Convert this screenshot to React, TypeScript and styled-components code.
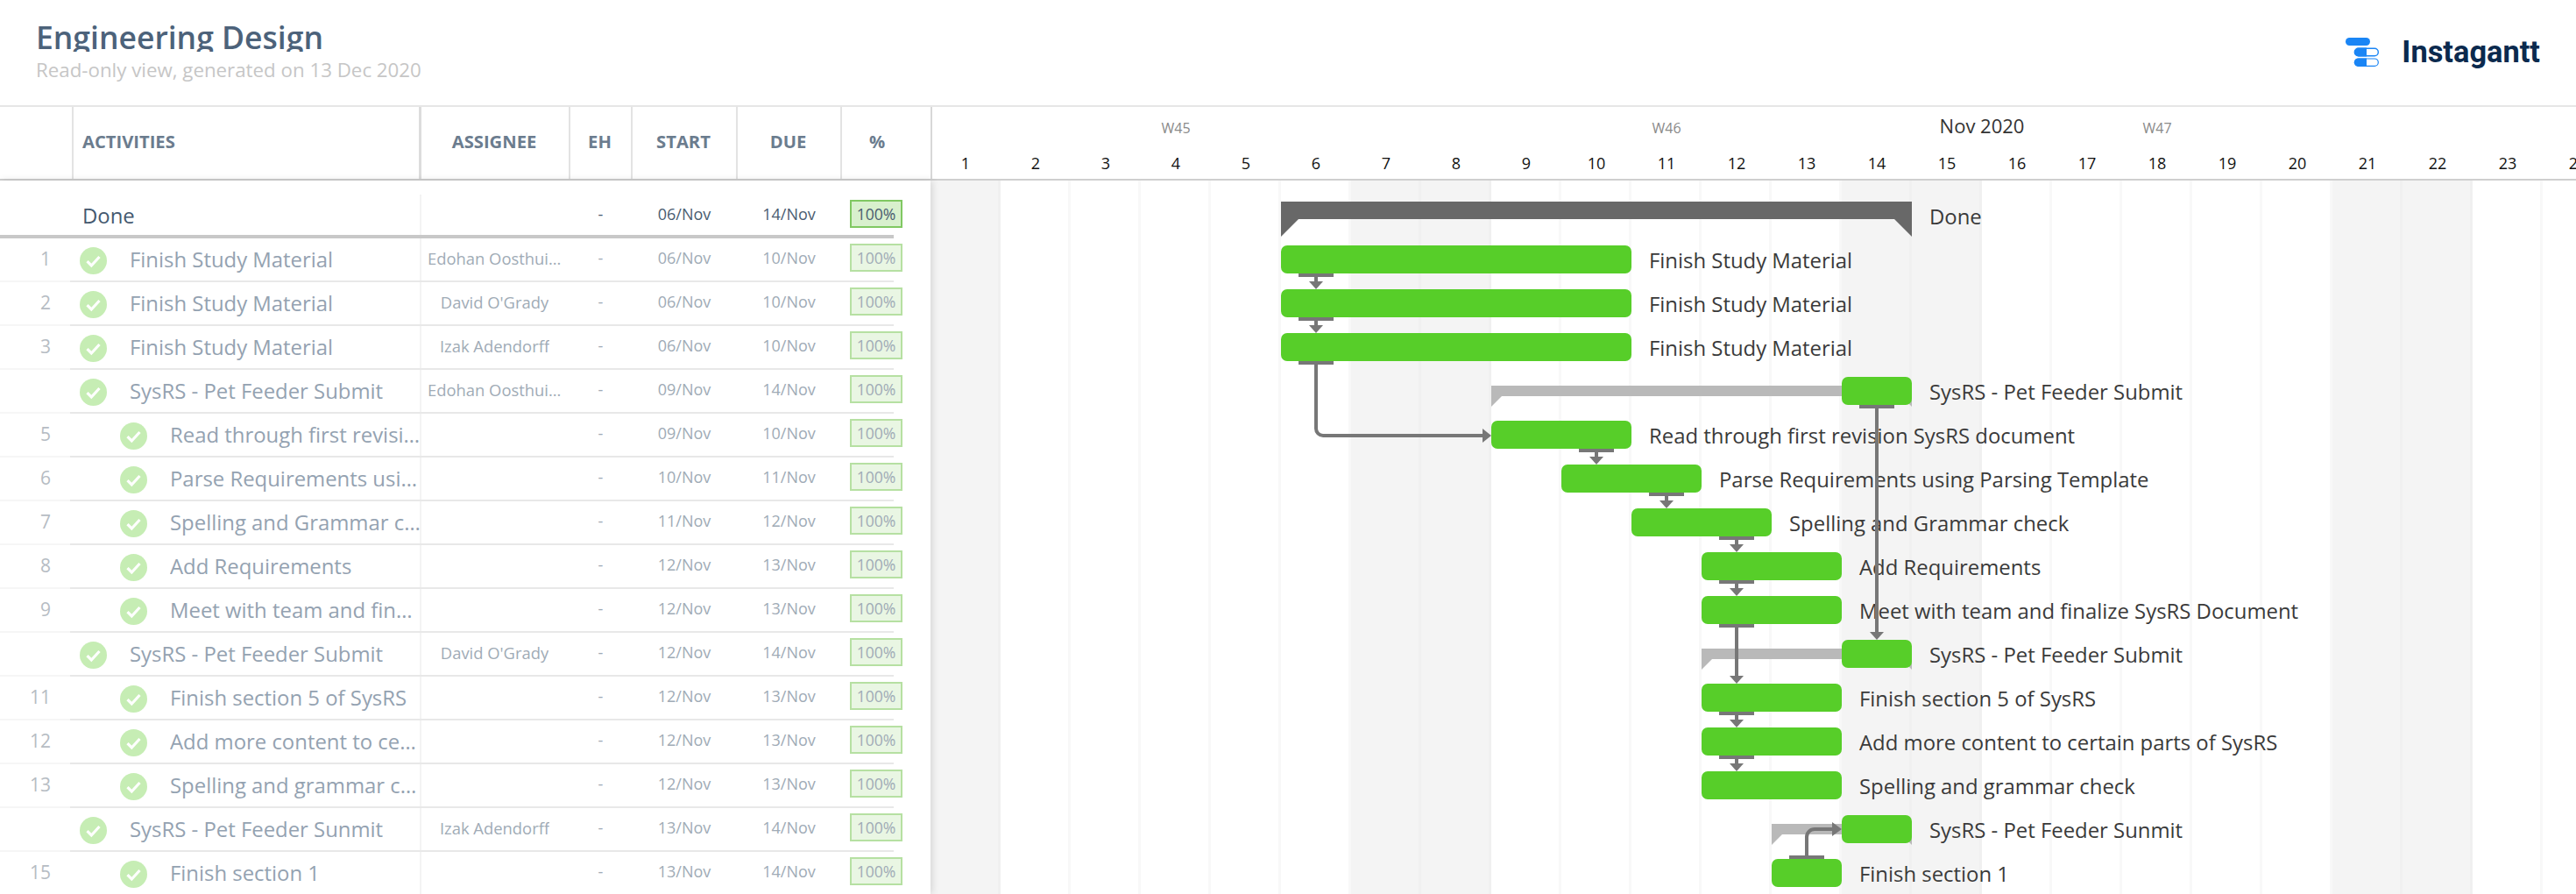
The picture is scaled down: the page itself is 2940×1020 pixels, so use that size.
import React from "react";
import styled, { createGlobalStyle } from "styled-components";

const Global = createGlobalStyle`
  html, body { margin: 0; padding: 0; background: #fff; }
  body { font-family: "Open Sans", "Liberation Sans", sans-serif; width: 2940px; height: 1020px; overflow: hidden; }
  * { box-sizing: border-box; }
`;

const DAY = 80;
const dayX = (d: number) => (d - 1) * DAY;

const Page = styled.div`
  width: 2940px;
  height: 1020px;
  overflow: hidden;
  display: flex;
  flex-direction: column;
`;
const TopBar = styled.header`
  height: 122px;
  flex: none;
  border-bottom: 2px solid #e6e6e6;
  display: flex;
  justify-content: space-between;
  padding: 19px 41px 0 41px;
`;
const TitleBlock = styled.div`
  display: flex;
  flex-direction: column;
`;
const Title = styled.h1`
  margin: 0;
  height: 40px;
  overflow: hidden;
  font-size: 35.5px;
  line-height: 46px;
  font-weight: 600;
  color: #4c627a;
`;
const Subtitle = styled.div`
  font-size: 22.3px;
  line-height: 30px;
  margin-top: 6px;
  color: #c6c6c6;
`;
const Logo = styled.div`
  display: flex;
  align-items: flex-start;
  gap: 26px;
  padding-top: 24px;
`;
const LogoSvg = styled.svg`
  flex: none;
  width: 38px;
  height: 33px;
`;
const LogoName = styled.div`
  font-family: Roboto, sans-serif;
  font-weight: 700;
  font-size: 34.4px;
  line-height: 34px;
  margin-top: -1px;
  color: #0b2a4e;
`;
const HeadRow = styled.div`
  height: 84px;
  flex: none;
  display: flex;
  border-bottom: 2px solid #cfcfcf;
`;
const cols = "84px 397px 170px 71px 120px 119px 101px";
const TableHead = styled.div`
  width: 1062px;
  flex: none;
  display: grid;
  grid-template-columns: ${cols};
`;
const HeadCell = styled.div<{ $left?: boolean; $thick?: boolean; $last?: boolean }>`
  display: flex;
  align-items: center;
  justify-content: ${(p) => (p.$left ? "flex-start" : "center")};
  padding: 0 ${(p) => (p.$last ? "21px" : "2px")} 4px ${(p) => (p.$left ? "10px" : "0")};
  border-right: ${(p) => (p.$last ? "0" : p.$thick ? "3px solid #dcdcdc" : "2px solid #e3e3e3")};
  font-size: 20.2px;
  font-weight: 700;
  color: #6b7c8e;
`;
const TimeHead = styled.div`
  flex: 1;
  position: relative;
  box-shadow: inset 2px 0 0 #d8d8d8;
  display: flex;
  flex-direction: column;
  min-width: 0;
`;
const WeekRow = styled.div`
  display: flex;
  height: 50px;
`;
const Week = styled.div`
  width: ${DAY * 7}px;
  flex: none;
  text-align: center;
  font-size: 16px;
  line-height: 48px;
  color: #8a8a8a;
`;
const Month = styled.div`
  position: absolute;
  left: 0;
  top: 5px;
  width: ${DAY * 30}px;
  text-align: center;
  font-size: 22px;
  line-height: 32px;
  color: #333;
`;
const DayRow = styled.div`
  display: flex;
`;
const DayNum = styled.div`
  width: ${DAY}px;
  flex: none;
  text-align: center;
  font-size: 18px;
  line-height: 28px;
  color: #111;
`;
const Body = styled.div`
  flex: 1;
  display: flex;
  min-height: 0;
`;
const Panel = styled.div`
  width: 1062px;
  flex: none;
  padding-top: 16px;
  background: #fff;
  position: relative;
  z-index: 2;
  box-shadow: 2px 0 8px rgba(0, 0, 0, 0.13);
`;
const Row = styled.div<{ $summary?: boolean }>`
  position: relative;
  height: 50px;
  display: grid;
  grid-template-columns: ${cols};
  align-items: stretch;
  &::after {
    content: "";
    position: absolute;
    left: 0;
    bottom: 0;
    width: 1020px;
    height: ${(p) => (p.$summary ? "4px" : "2px")};
    background: ${(p) =>
      p.$summary ? "#c8c8c8" : "linear-gradient(to right, #f6f6f6 80px, #e8e8e8 80px)"};
  }
`;
const NumCell = styled.div`
  display: flex;
  align-items: center;
  justify-content: flex-end;
  padding: 0 26px 4px 0;
  font-size: 21px;
  color: #b6bcc3;
`;
const ActCell = styled.div<{ $depth: number; $strong?: boolean }>`
  display: flex;
  align-items: center;
  min-width: 0;
  padding-left: ${(p) => (p.$depth ? 53 : p.$strong ? 10 : 7)}px;
  padding-bottom: 4px;
  font-size: 23.9px;
  color: ${(p) => (p.$strong ? "#45596f" : "#94a2b1")};
  border-right: 2px solid #f3f3f3;
`;
const CheckWrap = styled.svg`
  width: 31px;
  height: 31px;
  flex: none;
  margin-right: 26px;
  margin-top: 4px;
`;
const ActText = styled.span`
  white-space: nowrap;
  overflow: hidden;
  text-overflow: ellipsis;
  min-width: 0;
  margin-right: -2px;
`;
const InfoCell = styled.div<{ $strong?: boolean; $name?: boolean }>`
  display: flex;
  align-items: center;
  justify-content: center;
  min-width: 0;
  padding: ${(p) => (p.$name ? "0 10px 6px 7px" : "0 12px 6px 10px")};
  font-size: ${(p) => (p.$name ? "18.4px" : "18px")};
  color: ${(p) => (p.$strong ? "#4a5c70" : "#a0abb6")};
`;
const InfoText = styled.span`
  white-space: nowrap;
  overflow: hidden;
  text-overflow: ellipsis;
`;
const PctCell = styled.div`
  display: flex;
  padding: 6px 0 0 9px;
`;
const PctBox = styled.div<{ $strong?: boolean }>`
  width: 60px;
  height: 32px;
  display: flex;
  align-items: center;
  justify-content: center;
  font-size: 17.6px;
  color: ${(p) => (p.$strong ? "#4a5c70" : "#a0abb6")};
  background: ${(p) => (p.$strong ? "#d8f0cd" : "#e9f6e3")};
  border: 2px solid ${(p) => (p.$strong ? "#80c862" : "#b6e0a2")};
`;
const Chart = styled.div`
  flex: 1;
  position: relative;
  padding-top: 16px;
  min-width: 0;
  overflow: hidden;
`;
const GridLayer = styled.div`
  position: absolute;
  inset: 0;
  display: flex;
`;
const GridDay = styled.div<{ $weekend: boolean }>`
  width: ${DAY}px;
  flex: none;
  background: ${(p) => (p.$weekend ? "#f4f4f4" : "#fff")};
  border-right: 3px solid ${(p) => (p.$weekend ? "#f0f0f0" : "#f8f8f8")};
`;
const ChartRow = styled.div`
  position: relative;
  height: 50px;
  display: flex;
  align-items: flex-start;
  padding-top: 8px;
`;
const Track = styled.div`
  position: relative;
  flex: none;
  height: 32px;
`;
const TaskBar = styled.div`
  height: 32px;
  background: #57ce29;
  border-radius: 7px;
`;
const SummaryBar = styled.div`
  position: absolute;
  left: 0;
  right: 0;
  top: 10px;
  height: 12px;
  background: #b9b9b9;
  &::before,
  &::after {
    content: "";
    position: absolute;
    top: 12px;
    width: 12px;
    height: 12px;
    background: #b9b9b9;
  }
  &::before {
    left: 0;
    clip-path: polygon(0 0, 100% 0, 0 100%);
  }
  &::after {
    right: 0;
    clip-path: polygon(0 0, 100% 0, 100% 100%);
  }
`;
const Milestone = styled(TaskBar)`
  position: absolute;
  right: 0;
  top: 0;
  width: ${DAY}px;
`;
const GroupBar = styled.div`
  position: absolute;
  left: 0;
  right: 0;
  top: 0;
  height: 20px;
  background: #686868;
  &::before,
  &::after {
    content: "";
    position: absolute;
    top: 20px;
    width: 20px;
    height: 20px;
    background: #686868;
  }
  &::before {
    left: 0;
    clip-path: polygon(0 0, 100% 0, 0 100%);
  }
  &::after {
    right: 0;
    clip-path: polygon(0 0, 100% 0, 100% 100%);
  }
`;
const BarLabel = styled.div<{ $gap: number }>`
  margin-left: ${(p) => p.$gap}px;
  font-size: 23.9px;
  line-height: 34px;
  white-space: nowrap;
  color: #3a3a3a;
`;
const Links = styled.svg`
  position: absolute;
  left: 0;
  top: 0;
  width: 1878px;
  height: 814px;
  z-index: 1;
  pointer-events: none;
`;

type Kind = "task" | "summary";
type Item = {
  n?: number;
  name: string;
  who?: string;
  start: string;
  due: string;
  from: number;
  to: number;
  depth: number;
  kind: Kind;
};
const E = "Edohan Oosthuizen";
const rows: Item[] = [
  { n: 1, name: "Finish Study Material", who: E, start: "06", due: "10", from: 6, to: 10, depth: 0, kind: "task" },
  { n: 2, name: "Finish Study Material", who: "David O'Grady", start: "06", due: "10", from: 6, to: 10, depth: 0, kind: "task" },
  { n: 3, name: "Finish Study Material", who: "Izak Adendorff", start: "06", due: "10", from: 6, to: 10, depth: 0, kind: "task" },
  { name: "SysRS - Pet Feeder Submit", who: E, start: "09", due: "14", from: 9, to: 14, depth: 0, kind: "summary" },
  { n: 5, name: "Read through first revision SysRS document", start: "09", due: "10", from: 9, to: 10, depth: 1, kind: "task" },
  { n: 6, name: "Parse Requirements using Parsing Template", start: "10", due: "11", from: 10, to: 11, depth: 1, kind: "task" },
  { n: 7, name: "Spelling and Grammar check", start: "11", due: "12", from: 11, to: 12, depth: 1, kind: "task" },
  { n: 8, name: "Add Requirements", start: "12", due: "13", from: 12, to: 13, depth: 1, kind: "task" },
  { n: 9, name: "Meet with team and finalize SysRS Document", start: "12", due: "13", from: 12, to: 13, depth: 1, kind: "task" },
  { name: "SysRS - Pet Feeder Submit", who: "David O'Grady", start: "12", due: "14", from: 12, to: 14, depth: 0, kind: "summary" },
  { n: 11, name: "Finish section 5 of SysRS", start: "12", due: "13", from: 12, to: 13, depth: 1, kind: "task" },
  { n: 12, name: "Add more content to certain parts of SysRS", start: "12", due: "13", from: 12, to: 13, depth: 1, kind: "task" },
  { n: 13, name: "Spelling and grammar check", start: "12", due: "13", from: 12, to: 13, depth: 1, kind: "task" },
  { name: "SysRS - Pet Feeder Sunmit", who: "Izak Adendorff", start: "13", due: "14", from: 13, to: 14, depth: 0, kind: "summary" },
  { n: 15, name: "Finish section 1", start: "13", due: "14", from: 13, to: 13, depth: 1, kind: "task" },
];

const Check = () => (
  <CheckWrap viewBox="0 0 31 31">
    <circle cx="15.5" cy="15.5" r="15.5" fill="#c6edb4" />
    <path d="M8.5 16.2l4.8 4.8 9.2-10" fill="none" stroke="#fff" strokeWidth="3.2" />
  </CheckWrap>
);

const LogoMark = () => (
  <LogoSvg viewBox="0 0 38 33">
    <rect x="0" y="0" width="28" height="9" rx="4.5" fill="#1a85f5" />
    <rect x="10.8" y="12.3" width="26.5" height="8.4" rx="4.2" fill="#fff" stroke="#1a85f5" strokeWidth="1.4" />
    <path d="M14.5 11.6H24V21.4H14.5a4.9 4.9 0 0 1 0-9.8z" fill="#1a85f5" />
    <rect x="10.8" y="24" width="26.5" height="8.4" rx="4.2" fill="#fff" stroke="#1a85f5" strokeWidth="1.2" />
    <path d="M14.5 23.4H24V33H14.5a4.8 4.8 0 0 1 0-9.6z" fill="#1a85f5" />
  </LogoSvg>
);

// link geometry: page coordinates converted to the chart's own origin
const L = (x: number) => x - 1062;
const T = (y: number) => y - 206;
const Stub = ({ x, y }: { x: number; y: number }) => (
  <rect x={L(x - 20)} y={T(y)} width="40" height="4" fill="#777" />
);
const Down = ({ x, from, to }: { x: number; from: number; to: number }) => (
  <>
    <Stub x={x} y={from} />
    <rect x={L(x - 2)} y={T(from)} width="4" height={to - from - 8} fill="#777" />
    <path d={`M${L(x - 8)} ${T(to - 9)}h16l-8 9z`} fill="#777" />
  </>
);

const LinksLayer = () => (
  <Links>
    <Down x={1502} from={312} to={330} />
    <Down x={1502} from={362} to={380} />
    <Stub x={1502} y={412} />
    <path d={`M${L(1502)} ${T(414)}V${T(489)}a8 8 0 0 0 8 8H${L(1692)}`} fill="none" stroke="#777" strokeWidth="4" />
    <path d={`M${L(1692)} ${T(489)}l10 8-10 8z`} fill="#777" />
    <Down x={1822} from={512} to={530} />
    <Down x={1902} from={562} to={580} />
    <Down x={1982} from={612} to={630} />
    <Down x={1982} from={662} to={680} />
    <Down x={1982} from={712} to={780} />
    <Down x={1982} from={812} to={830} />
    <Down x={1982} from={862} to={880} />
    <Down x={2142} from={462} to={730} />
    <Stub x={2062} y={976} />
    <path d={`M${L(2062)} ${T(978)}V${T(955)}a9 9 0 0 1 9-9H${L(2092)}`} fill="none" stroke="#777" strokeWidth="4" />
    <path d={`M${L(2091)} ${T(938)}l11 8-11 8z`} fill="#777" />
  </Links>
);

const headers = ["ASSIGNEE", "EH", "START", "DUE"];
const days = Array.from({ length: 25 }, (_, i) => i + 1);
const isWeekend = (d: number) => d % 7 === 0 || d % 7 === 1;

export default function App() {
  return (
    <Page>
      <Global />
      <TopBar>
        <TitleBlock>
          <Title>Engineering Design</Title>
          <Subtitle>Read-only view, generated on 13 Dec 2020</Subtitle>
        </TitleBlock>
        <Logo>
          <LogoMark />
          <LogoName>Instagantt</LogoName>
        </Logo>
      </TopBar>
      <HeadRow>
        <TableHead>
          <HeadCell />
          <HeadCell $left $thick>ACTIVITIES</HeadCell>
          {headers.map((h) => (
            <HeadCell key={h}>{h}</HeadCell>
          ))}
          <HeadCell $last>%</HeadCell>
        </TableHead>
        <TimeHead>
          <Month>Nov 2020</Month>
          <WeekRow>
            <Week>W45</Week>
            <Week>W46</Week>
            <Week>W47</Week>
          </WeekRow>
          <DayRow>
            {days.map((d) => (
              <DayNum key={d}>{d}</DayNum>
            ))}
          </DayRow>
        </TimeHead>
      </HeadRow>
      <Body>
        <Panel>
          <Row $summary>
            <NumCell />
            <ActCell $depth={0} $strong>
              <ActText>Done</ActText>
            </ActCell>
            <InfoCell />
            <InfoCell $strong>-</InfoCell>
            <InfoCell $strong>06/Nov</InfoCell>
            <InfoCell $strong>14/Nov</InfoCell>
            <PctCell>
              <PctBox $strong>100%</PctBox>
            </PctCell>
          </Row>
          {rows.map((r, i) => (
            <Row key={i}>
              <NumCell>{r.n}</NumCell>
              <ActCell $depth={r.depth}>
                <Check />
                <ActText>{r.name}</ActText>
              </ActCell>
              <InfoCell $name>
                <InfoText>{r.who}</InfoText>
              </InfoCell>
              <InfoCell>-</InfoCell>
              <InfoCell>{r.start}/Nov</InfoCell>
              <InfoCell>{r.due}/Nov</InfoCell>
              <PctCell>
                <PctBox>100%</PctBox>
              </PctCell>
            </Row>
          ))}
        </Panel>
        <Chart>
          <GridLayer>
            {days.map((d) => (
              <GridDay key={d} $weekend={isWeekend(d)} />
            ))}
          </GridLayer>
          <ChartRow>
            <Track style={{ marginLeft: dayX(6), width: dayX(15) - dayX(6) }}>
              <GroupBar />
            </Track>
            <BarLabel $gap={20}>Done</BarLabel>
          </ChartRow>
          {rows.map((r, i) => (
            <ChartRow key={i}>
              <Track style={{ marginLeft: dayX(r.from), width: dayX(r.to + 1) - dayX(r.from) }}>
                {r.kind === "summary" ? (
                  <>
                    <SummaryBar />
                    <Milestone />
                  </>
                ) : (
                  <TaskBar />
                )}
              </Track>
              <BarLabel $gap={20}>{r.name}</BarLabel>
            </ChartRow>
          ))}
          <LinksLayer />
        </Chart>
      </Body>
    </Page>
  );
}
